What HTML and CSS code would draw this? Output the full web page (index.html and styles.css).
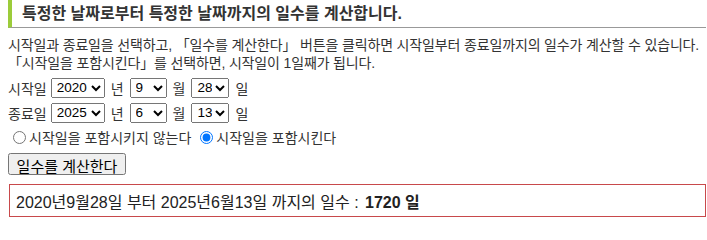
FILE: index.html
```html
<!DOCTYPE html>
<html lang="ko">
<head>
<meta charset="utf-8">
<title>일수 계산</title>
<link rel="stylesheet" href="styles.css">
</head>
<body>
<h2 class="title">특정한 날짜로부터 특정한 날짜까지의 일수를 계산합니다.</h2>
<p class="desc">시작일과 종료일을 선택하고, 「일수를 계산한다」 버튼을 클릭하면 시작일부터 종료일까지의 일수가 계산할 수 있습니다.<br>「시작일을 포함시킨다」를 선택하면, 시작일이 1일째가 됩니다.</p>
<div class="row">
  <span class="lbl">시작일</span>
  <select class="sel sel-y"><option>2020</option></select>
  <span class="unit">년</span>
  <select class="sel sel-m"><option>9</option></select>
  <span class="unit">월</span>
  <select class="sel sel-d"><option>28</option></select>
  <span class="unit">일</span>
</div>
<div class="row">
  <span class="lbl">종료일</span>
  <select class="sel sel-y"><option>2025</option></select>
  <span class="unit">년</span>
  <select class="sel sel-m"><option>6</option></select>
  <span class="unit">월</span>
  <select class="sel sel-d"><option>13</option></select>
  <span class="unit">일</span>
</div>
<div class="radios">
  <label class="opt"><input type="radio" name="inc">시작일을 포함시키지 않는다</label>
  <label class="opt"><input type="radio" name="inc" checked>시작일을 포함시킨다</label>
</div>
<div class="btnrow"><button class="calc" type="button">일수를 계산한다</button></div>
<div class="result"><span class="result-text">2020년9월28일 부터 2025년6월13일 까지의 일수 : <b>1720 일</b></span></div>
</body>
</html>
```
FILE: styles.css
```css
html, body {
  background: #fff;
}
body {
  margin: 0 1px 0 8px;
  font-family: "Liberation Sans", "Noto Sans CJK KR", sans-serif;
  color: #333;
  font-size: 14px;
}
.title {
  margin: 0;
  height: 28px;
  box-sizing: border-box;
  padding: 0 0 0 10px;
  border-left: 4px solid #9ccc3a;
  border-bottom: 1px solid #999;
  font-size: 16px;
  font-weight: bold;
  line-height: 27px;
  color: #333;
}
.desc {
  margin: 8px 0 3px 0;
  line-height: 18px;
  font-size: 14px;
  letter-spacing: -0.15px;
  white-space: nowrap;
}
.row {
  display: flex;
  align-items: center;
  height: 25px;
}
.lbl {
  margin-right: 4px;
}
.unit {
  margin: 0 6px;
}
.sel {
  height: 20px;
  font-family: "Liberation Sans", sans-serif;
  font-size: 13.5px;
  color: #000;
  padding: 0 0 0 1px;
  box-sizing: border-box;
}
.sel-y { width: 54px; }
.sel-m { width: 37px; }
.sel-d { width: 38px; }
.radios {
  display: flex;
  align-items: center;
  height: 24px;
}
.opt {
  display: flex;
  align-items: center;
  margin-right: 4px;
}
.opt input {
  margin: 0 3px 0 5px;
  width: 13px;
  height: 13px;
}
.btnrow {
  margin-top: 4px;
}
.calc {
  width: 118px;
  height: 22px;
  font-family: "Liberation Sans", "Noto Sans CJK KR", sans-serif;
  font-size: 15px;
  padding: 0;
  color: #000;
}
.result {
  margin: 9px 0 0 1px;
  height: 33px;
  box-sizing: border-box;
  border: 1px solid #c8494b;
  padding: 0 6px;
  display: flex;
  align-items: center;
  font-size: 16px;
  color: #222;
}
.result-text {
  white-space: nowrap;
}
.result b {
  margin-left: 2px;
}
```
